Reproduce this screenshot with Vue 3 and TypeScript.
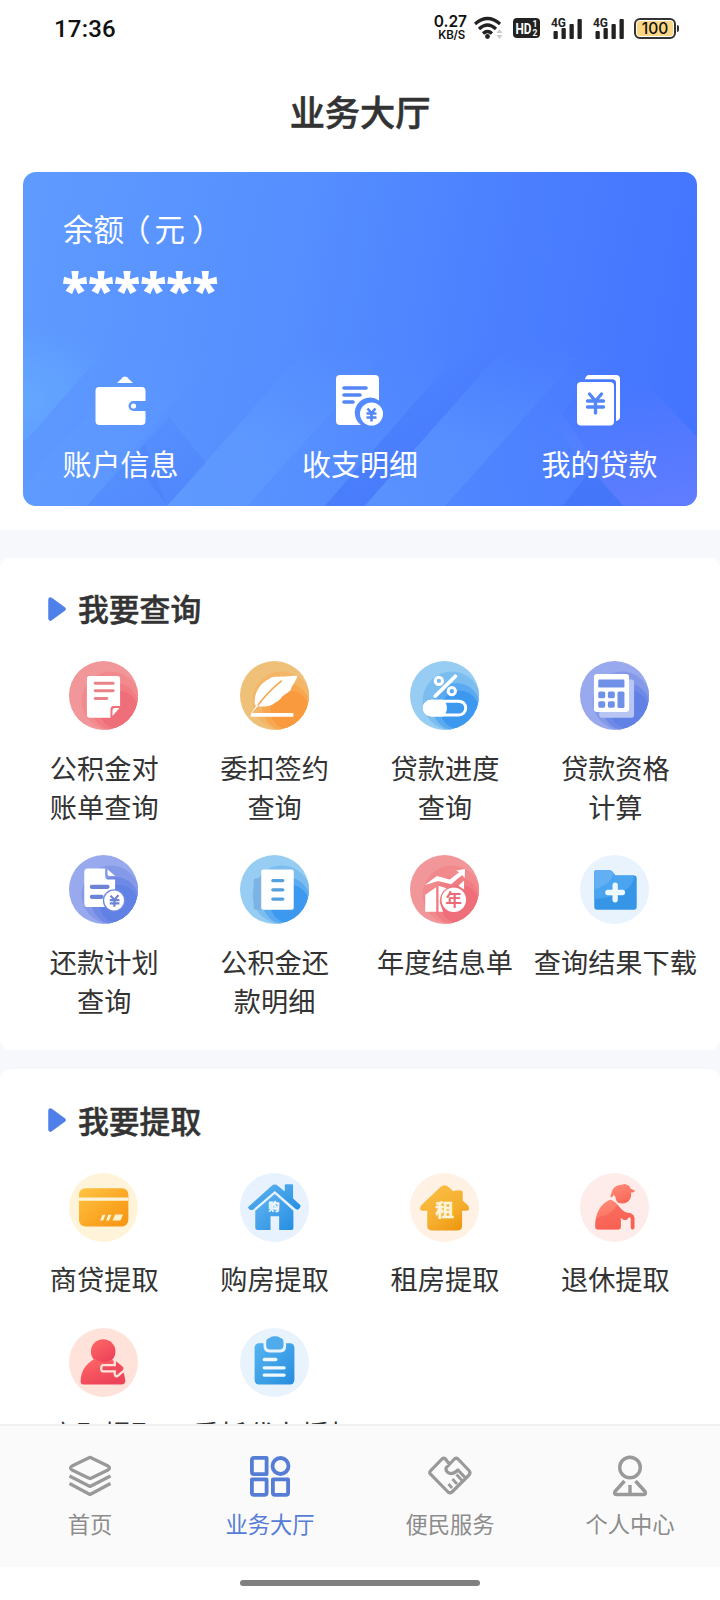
<script setup lang="ts">
interface Entry {
  lines: string[]
  box: string
  art: string
}

// Layered tinted discs shared by the round service icons.
const swirl = (x: number, y: number, colors: [string, string, string, string]): string =>
  `<rect x="${x}" y="${y}" width="208" height="208" fill="${colors[0]}"/>` +
  `<circle cx="${x + 126}" cy="${y + 120}" r="88" fill="${colors[1]}"/>` +
  `<circle cx="${x + 139}" cy="${y + 138}" r="72" fill="${colors[2]}"/>` +
  `<circle cx="${x + 150}" cy="${y + 148}" r="58" fill="${colors[3]}"/>`

const red: [string, string, string, string] = ['#f19799', '#f28a8d', '#f17c82', '#ee6f79']
const orange: [string, string, string, string] = ['#efc077', '#f3b566', '#f6a750', '#f89a3d']
const sky: [string, string, string, string] = ['#97cdf3', '#7cbdf0', '#59aaf0', '#3d98ef']
const indigo: [string, string, string, string] = ['#98a9ee', '#8499e8', '#6f8ae6', '#6281e4']

const cjk = `font-family="'Noto Sans CJK SC', sans-serif" font-weight="700" text-anchor="middle"`

const queries: Entry[] = [
  {
    lines: ['公积金对', '账单查询'],
    box: '118 243 208 208',
    art:
      swirl(118, 243, red) +
      `<path d="M180 288H264Q272 288 272 296V379H252Q243 380 243 390V414H180Q172 414 172 406V296Q172 288 180 288Z" fill="#fff"/>
       <path d="M249 409V393Q249 385 257 385H270Z" fill="#fff"/>
       <g stroke="#e98287" stroke-width="9" stroke-linecap="round"><path d="M197 310H251M197 333H251M197 356H232"/></g>`,
  },
  {
    lines: ['委扣签约', '查询'],
    box: '628 243 208 208',
    art:
      swirl(628, 243, orange) +
      `<path d="M673 376C668 349 682 319 704 304C709 298 717 298 720 294C731 288 745 291 751 290C767 291 784 285 801 288C797 304 782 319 780 332C773 339 763 343 755 350C749 362 737 366 728 373C714 380 697 381 685 380Z" fill="#fff"/>
       <path d="M668 397Q700 345 754 302" fill="none" stroke="#f3a957" stroke-width="5"/>
       <path d="M683 378L664 400H789V411H660Q659 401 667 393L679 374Z" fill="#fff"/>`,
  },
  {
    lines: ['贷款进度', '查询'],
    box: '150 63 208 208',
    art:
      swirl(150, 63, sky) +
      `<g fill="none" stroke="#fff"><circle cx="237" cy="123" r="11" stroke-width="9"/><circle cx="276" cy="154" r="11" stroke-width="9"/>
       <path d="M287 109L226 169" stroke-width="11" stroke-linecap="round"/><rect x="193" y="184" width="125" height="42" rx="21" stroke-width="9"/></g>
       <path d="M214 180H250C265 191 265 218 250 230H214A25 25 0 0 1 214 180Z" fill="#fff"/>`,
  },
  {
    lines: ['贷款资格', '计算'],
    box: '662 63 208 208',
    art:
      swirl(662, 63, indigo) +
      `<rect x="720" y="119" width="105" height="115" rx="8" fill="#b9c6f4"/><rect x="704" y="102" width="106" height="115" rx="9" fill="#fff"/>
       <g fill="#6f92e8"><rect x="717" y="119" width="79" height="24" rx="4"/><rect x="717" y="155" width="21" height="20" rx="5"/><rect x="746" y="155" width="21" height="20" rx="5"/><rect x="717" y="184" width="21" height="20" rx="5"/><rect x="746" y="184" width="21" height="20" rx="5"/><rect x="775" y="155" width="21" height="50" rx="5"/></g>`,
  },
  {
    lines: ['还款计划', '查询'],
    box: '118 45 208 208',
    art:
      swirl(118, 45, indigo) +
      `<path d="M175 86H227V108Q228 120 240 119H257V202H175Q164 202 164 191V97Q164 86 175 86Z" fill="#fff"/><path d="M234 88L257 108H240Q234 108 234 102Z" fill="#fff"/>
       <path d="M187 141H234M187 171H216" stroke="#6c83d6" stroke-width="13" stroke-linecap="round"/>
       <circle cx="254" cy="182" r="34" fill="#6f8ae2"/><circle cx="254" cy="182" r="30" fill="#fff"/>
       <path d="M243 168L255 180L267 166M255 180V201M241 181H270M241 191H270" fill="none" stroke="#6c83d6" stroke-width="6.500"/>`,
  },
  {
    lines: ['公积金还', '款明细'],
    box: '628 45 208 208',
    art:
      swirl(628, 45, sky) +
      `<rect x="669" y="116" width="60" height="94" rx="7" fill="#7db2e4"/><rect x="692" y="89" width="98" height="121" rx="6" fill="#fff"/>
       <path d="M727 122H757M727 150H757M727 178H757" stroke="#56a0dc" stroke-width="10" stroke-linecap="round"/>`,
  },
  {
    lines: ['年度结息单'],
    box: '150 45 208 208',
    art:
      swirl(150, 45, red) +
      `<path d="M196 165L229 142V216H196ZM236 138L260 145L249 155Q238 174 240 190L250 216H236Z" fill="#fff"/>
       <path d="M194 136L231 108L270 119L298 97L289 92L316 87L315 114L307 105L274 133L234 123Z" fill="#fff"/><path d="M296 138L313 122V149Z" fill="#fff"/>
       <circle cx="282" cy="180" r="37" fill="#fff"/><text x="282" y="198" font-size="50" fill="#e96c78" ${cjk}>年</text>`,
  },
  {
    lines: ['查询结果下载'],
    box: '662 45 208 208',
    art: `<rect x="662" y="45" width="208" height="208" fill="#e9f3fe"/>
       <path d="M713 90H749Q755 90 759 95L769 107H825Q833 107 833 116V201Q833 210 824 210H714Q705 210 705 201V98Q705 90 713 90Z" fill="#3795e8"/>
       <path d="M713 90H749Q755 90 759 95L769 107H825C825 141 788 172 705 178V98Q705 90 713 90Z" fill="#4ba4f0"/><path d="M713 90H749Q759 96 763 101C757 126 731 143 705 148V98Q705 90 713 90Z" fill="#62aff3"/>
       <path d="M768 136V180M746 158H790" stroke="#eef8ff" stroke-width="16" stroke-linecap="round"/>`,
  },
]

const withdrawals: Entry[] = [
  {
    lines: ['商贷提取'],
    box: '118 248 208 208',
    art: `<defs><linearGradient id="bankcard" x1="0" y1="0" x2="1" y2="1"><stop offset="0" stop-color="#ffc444"/><stop offset=".6" stop-color="#faa522"/><stop offset="1" stop-color="#f69413"/></linearGradient></defs>
       <rect x="118" y="248" width="208" height="208" fill="#fff4d9"/><rect x="148" y="294" width="149" height="115" rx="19" fill="url(#bankcard)"/><path d="M148 327H297" stroke="#fff4d9" stroke-width="10"/>
       <path d="M219 374H228L221 391H212ZM236 374H246L239 391H230ZM257 373H281L273 391H249Z" fill="#fff3cf"/>`,
  },
  {
    lines: ['购房提取'],
    box: '629 248 208 208',
    art: `<defs><linearGradient id="house" x1="0" y1="0" x2="1" y2="1"><stop offset="0" stop-color="#62b5f1"/><stop offset="1" stop-color="#258ee2"/></linearGradient></defs>
       <rect x="629" y="248" width="208" height="208" fill="#e7f2fe"/>
       <path d="M655 349L724 287Q734 279 744 287L764 304V284Q764 282 768 282H786Q789 282 789 286V325L810 344Q814 350 807 356Q803 361 796 356L734 302L669 358Q663 362 657 357Q651 353 655 349Z" fill="url(#house)"/>
       <path d="M675 362L734 311L790 362V414Q790 420 784 420H747V378H721V420H682Q675 420 675 413Z" fill="url(#house)"/>
       <text x="731" y="364" font-size="34" fill="#f4fbff" stroke="#f4fbff" ${cjk}>购</text>`,
  },
  {
    lines: ['租房提取'],
    box: '150 67 208 208',
    art: `<defs><linearGradient id="rent" x1="0" y1="0" x2=".7" y2="1"><stop offset="0" stop-color="#fbc24a"/><stop offset=".7" stop-color="#f5ad2c"/><stop offset="1" stop-color="#ee9812"/></linearGradient></defs>
       <rect x="150" y="67" width="208" height="208" fill="#fff2e4"/>
       <path d="M242 109Q254 99 266 109L281 122Q284 120 288 120H303Q309 120 309 126V150L325 165Q329 171 327 178Q325 181 319 181H307V227Q307 240 294 240H215Q202 240 202 227V181H187Q180 181 180 174Q180 167 187 161Z" fill="url(#rent)"/>
       <text x="255" y="200" font-size="56" fill="#fff5dd" stroke="#fff5dd" stroke-width="1.500" ${cjk}>租</text>`,
  },
  {
    lines: ['退休提取'],
    box: '662 67 208 208',
    art: `<defs><linearGradient id="elder" x1="0" y1="0" x2=".4" y2="1"><stop offset="0" stop-color="#ff8d79"/><stop offset="1" stop-color="#fb6858"/></linearGradient></defs>
       <rect x="662" y="67" width="208" height="208" fill="#feecea"/>
       <path d="M758 140Q751 139 756 131Q760 106 781 103Q788 103 793 101Q799 99 804 103Q812 104 814 114L827 120Q828 124 821 126L816 126Q818 147 804 155Q791 163 776 156Q769 150 768 137Q764 135 762 132Q763 138 758 140Z" fill="url(#elder)"/>
       <path d="M749 149Q755 146 761 151Q773 157 780 169Q791 183 803 187Q815 186 823 194Q827 199 826 208V232Q826 237 821 237Q815 237 815 231V205Q814 199 809 201Q802 212 792 207Q788 205 785 201V229Q785 237 777 237H716Q708 237 708 229C707 188 724 161 749 149Z" fill="url(#elder)"/>
       <path d="M709 207Q715 198 742 194Q762 184 775 162Q788 181 803 187Q815 186 823 194Q827 199 826 208V232Q826 237 821 237Q815 237 815 231V205Q814 199 809 201Q802 212 792 207Q788 205 785 201V229Q785 237 777 237H716Q708 237 708 229Z" fill="#f55b50" opacity=".55"/>`,
  },
  {
    lines: ['离职提取'],
    box: '208 52 208 208',
    art: `<defs><linearGradient id="leave" x1="0" y1="0" x2=".6" y2="1"><stop offset="0" stop-color="#ff6a67"/><stop offset="1" stop-color="#ed4258"/></linearGradient></defs>
       <rect x="208" y="52" width="208" height="208" fill="#ffe3db"/><circle cx="311" cy="123" r="37" fill="url(#leave)"/>
       <path d="M286 145Q310 165 336 147Q362 160 374 190L378 211Q378 222 366 222H252Q243 222 243 213Q243 169 286 145Z" fill="url(#leave)"/>
       <path d="M312 164H346V154Q347 147 354 151L374 168Q378 174 373 181L354 197Q347 199 346 192V183H312Q305 183 305 174Q305 164 312 164Z" fill="#f04c5c" stroke="#ffe3db" stroke-width="7"/>`,
  },
  {
    lines: ['委托代办授权'],
    box: '718 52 208 208',
    art: `<defs><linearGradient id="clip" x1="0" y1="0" x2="1" y2="1"><stop offset="0" stop-color="#56b5f0"/><stop offset="1" stop-color="#278dde"/></linearGradient></defs>
       <rect x="718" y="52" width="208" height="208" fill="#e9f3fe"/><rect x="762" y="98" width="120" height="124" rx="13" fill="url(#clip)"/>
       <path d="M789 96V108Q789 126 807 126H840Q857 126 857 108V96Z" fill="#e9f3fe"/>
       <path d="M807 82Q812 76 823 77Q835 76 840 82Q849 84 849 94V105Q849 117 837 117H809Q797 117 797 105V94Q797 84 807 82Z" fill="#4fabeb"/>
       <path d="M791 147H826M791 172H851M791 194H851" stroke="#edf8ff" stroke-width="10" stroke-linecap="round"/>`,
  },
]

const sections = [
  { title: '我要查询', cls: 'query', items: queries },
  { title: '我要提取', cls: 'withdraw', items: withdrawals },
]

const bars = [8, 11, 15, 20]
</script>

<template>
  <div class="phone">
    <header class="status">
      <span class="clock">17:36</span>
      <div class="indicators">
        <div class="speed"><b>0.27</b><i>KB/S</i></div>
        <svg class="wifi" width="30" height="24" viewBox="0 0 30 24">
          <g fill="none" stroke="#222" stroke-width="3.200">
            <path d="M1 8Q13.500 -3 26 8M5 13Q13.500 5 22 13M9 17.500Q13.500 13.500 18 17.500" />
          </g>
          <circle cx="13.500" cy="20.500" r="2.400" fill="#222" />
          <path d="M22.500 17L25.500 13L28.500 17ZM22.500 19L25.500 23L28.500 19Z" fill="#ccc" />
        </svg>
        <svg class="hd" width="27" height="20" viewBox="0 0 27 20">
          <rect width="27" height="20" rx="4" fill="#222" />
          <g fill="#fff" font-family="Roboto, sans-serif" font-weight="700">
            <text x="2.500" y="15.500" font-size="15" textLength="16" lengthAdjust="spacingAndGlyphs">HD</text>
            <text x="19.500" y="9" font-size="8.500">1</text>
            <text x="19.500" y="17.500" font-size="8.500">2</text>
          </g>
        </svg>
        <svg v-for="n in 2" :key="n" class="signal" width="30" height="24" viewBox="0 0 30 24">
          <rect v-for="(h, i) in bars" :key="i" :x="1.500 + i * 8" :y="23 - h" width="4.300" :height="h" rx="1" fill="#222" />
          <text x="-1" y="11" font-family="Roboto, sans-serif" font-weight="700" font-size="13" fill="#222" stroke="#fff" stroke-width="2" paint-order="stroke" textLength="15" lengthAdjust="spacingAndGlyphs">4G</text>
        </svg>
        <div class="battery">100</div>
      </div>
    </header>

    <h1 class="title">业务大厅</h1>

    <section class="balance">
      <svg class="pattern" viewBox="51 36 1467 1001" preserveAspectRatio="none">
        <defs>
          <linearGradient id="fade" x1="0" y1="560" x2="0" y2="1036" gradientUnits="userSpaceOnUse">
            <stop offset="0" stop-color="#6ba8ff" stop-opacity="0" />
            <stop offset=".6" stop-color="#6ba8ff" stop-opacity=".45" />
            <stop offset="1" stop-color="#6ba8ff" stop-opacity=".5" />
          </linearGradient>
          <linearGradient id="shade" x1="0" y1="560" x2="0" y2="1036" gradientUnits="userSpaceOnUse">
            <stop offset="0" stop-color="#3c6cf4" stop-opacity="0" />
            <stop offset="1" stop-color="#3c6cf4" stop-opacity=".5" />
          </linearGradient>
          <linearGradient id="violet" x1="1340" y1="680" x2="1516" y2="1036" gradientUnits="userSpaceOnUse">
            <stop offset="0" stop-color="#7583ff" stop-opacity="0" />
            <stop offset="1" stop-color="#7583ff" stop-opacity=".6" />
          </linearGradient>
          <radialGradient id="glow" cx="51" cy="720" r="230" gradientUnits="userSpaceOnUse">
            <stop offset="0" stop-color="#66acff" stop-opacity=".75" />
            <stop offset="1" stop-color="#66acff" stop-opacity="0" />
          </radialGradient>
        </defs>
        <path d="M51 460H300L51 850Z" fill="url(#glow)" />
        <path d="M51 980L320 560H480L190 1036H51Z" fill="url(#fade)" opacity=".3" />
        <path d="M190 1036L315 850L365 1036Z" fill="url(#shade)" opacity=".4" />
        <path d="M315 850L370 770L450 910L365 1036L290 900Z" fill="url(#shade)" opacity=".5" />
        <path d="M365 1036L670 560H850L540 1036Z" fill="url(#fade)" opacity=".7" />
        <path d="M540 1036L850 560H1010L708 1036Z" fill="url(#fade)" opacity=".3" />
        <path d="M708 1036L1010 560H1100L795 1036Z" fill="url(#shade)" opacity=".8" />
        <path d="M795 1036L1100 560H1280L970 1036Z" fill="url(#fade)" opacity=".75" />
        <path d="M970 1036L1280 560H1340L1225 760L1357 1036Z" fill="url(#fade)" opacity=".3" />
        <path d="M1225 1036L1295 915L1357 1036Z" fill="url(#shade)" />
        <path d="M1357 1036L1180 760L1340 570L1518 830V1036Z" fill="url(#violet)" />
      </svg>
      <div class="balance-body">
        <div class="balance-label">余额<span class="open">（</span>元<span class="close">）</span></div>
        <div class="balance-value">******</div>
        <div class="shortcuts">
          <div class="shortcut">
            <svg width="52" height="52" viewBox="0 0 52 52">
              <path d="M22 8L28 2.200Q30 .8 32 2.200L38 8Z" fill="#fff" />
              <path d="M4 12H47Q50.500 12 50.500 16V26H38.500A5 5 0 0 0 38.500 36H50.500V46Q50.500 50 46.500 50H4.500Q.5 50 .5 46V16Q.5 12 4 12Z" fill="#fff" />
              <circle cx="38.500" cy="31" r="2.600" fill="#fff" />
            </svg>
            <span>账户信息</span>
          </div>
          <div class="shortcut">
            <svg width="52" height="52" viewBox="0 0 52 52">
              <path d="M6 0H41Q45 0 45 4V25.500A14.500 14.500 0 0 0 27 50H6Q2 50 2 46V4Q2 0 6 0Z" fill="#fff" />
              <path d="M10 13H32M10 20H26M10 27H19" stroke="#5487f5" stroke-width="3.600" stroke-linecap="round" />
              <circle cx="37.500" cy="39" r="11.500" fill="#fff" />
              <path d="M33.500 33.500L37.500 38L41.500 33.500M37.500 38V46.500M32.500 38.500H42.500M32.500 42.500H42.500" fill="none" stroke="#5487f5" stroke-width="2.600" />
            </svg>
            <span>收支明细</span>
          </div>
          <div class="shortcut">
            <svg width="52" height="52" viewBox="0 0 52 52">
              <path d="M11 4Q12 0 15 0H42Q46 0 46 4V42Q46 45 42 46V8Q42 4.300 38 4.300H11Z" fill="#fff" />
              <rect x="3" y="7" width="37" height="43.500" rx="4" fill="#fff" />
              <path d="M15.500 19L21.500 26L27.500 19M21.500 26V38M13.500 26H29.500M13.500 32H29.500" fill="none" stroke="#5487f5" stroke-width="3.400" stroke-linecap="round" />
            </svg>
            <span>我的贷款</span>
          </div>
        </div>
      </div>
    </section>

    <main class="content">
      <section v-for="s in sections" :key="s.title" class="panel" :class="s.cls">
        <h2>
          <svg width="18" height="24" viewBox="0 0 18 24"><path d="M2.500 2.500L15.500 12L2.500 21.500Z" fill="#4f7fe9" stroke="#4f7fe9" stroke-width="4.500" stroke-linejoin="round" /></svg>
          <span>{{ s.title }}</span>
        </h2>
        <div class="grid">
          <div v-for="item in s.items" :key="item.lines[0]" class="entry">
            <svg class="round" :viewBox="item.box" v-html="item.art" />
            <p><span v-for="line in item.lines" :key="line">{{ line }}</span></p>
          </div>
        </div>
      </section>
    </main>

    <nav class="tabs">
      <div class="tab">
        <svg width="44" height="42" viewBox="0 0 44 42" fill="none" stroke="#999" stroke-width="3.200" stroke-linejoin="round">
          <path d="M20.500 3Q22 2 23.500 3L40 11Q43 13 40 15L23.500 23Q22 24 20.500 23L4 15Q1 13 4 11Z" />
          <path d="M1.500 21L22 31.500L42.500 21M1.500 28.500L22 39.500L42.500 28.500" />
        </svg>
        <span>首页</span>
      </div>
      <div class="tab active">
        <svg width="44" height="42" viewBox="0 0 44 42" fill="none" stroke="#567dd5" stroke-width="3.800">
          <path d="M6 2.900H18.600V19.100H6Q3.900 19.100 3.900 17V5Q3.900 2.900 6 2.900Z" stroke-linejoin="round" />
          <circle cx="32.500" cy="11" r="8" />
          <path d="M3.900 24.400H18.600V38Q18.600 39.800 16.500 39.800H6Q3.900 39.800 3.900 38ZM24.900 24.400H40.100V38Q40.100 39.800 38 39.800H27Q24.900 39.800 24.900 38Z" stroke-linejoin="round" />
        </svg>
        <span>业务大厅</span>
      </div>
      <div class="tab">
        <svg width="44" height="42" viewBox="0 0 44 42" fill="none" stroke="#999" stroke-width="3.200" stroke-linejoin="round">
          <path d="M22 10L17.500 4Q15.800 2.500 14 4L2.500 15.800Q1 17.500 2.500 19.200L20 37Q22 38.700 24 37L41 20Q43 17.800 41 15.500L30 4Q28.200 2.500 26.400 4L18 13Q17.500 17 22 18.500Q26 19 30 15L37 22.500" />
          <path d="M28.500 19.500L34 25.500M24.500 24L29 29M20.500 29L24 33" stroke-width="2.800" />
        </svg>
        <span>便民服务</span>
      </div>
      <div class="tab">
        <svg width="44" height="42" viewBox="0 0 44 42" fill="none" stroke="#999" stroke-width="3.400">
          <circle cx="22" cy="12.500" r="10.300" />
          <path d="M16.500 26L7 36.500Q5.500 39.500 9 39.500H35Q38.500 39.500 37 36.500L27.500 26M22 30V39.500" stroke-linejoin="round" />
        </svg>
        <span>个人中心</span>
      </div>
    </nav>
    <footer class="gesture"><div class="handle" /></footer>
  </div>
</template>

<style>
body {
  margin: 0;
  background: #fff;
}
</style>

<style scoped>
.phone {
  width: 720px;
  height: 1600px;
  overflow: hidden;
  display: flex;
  flex-direction: column;
  background: #fff;
  color: #333;
  font-family: "Noto Sans CJK SC", sans-serif;
}

.phone svg {
  display: block;
  flex: none;
}

.status {
  flex: none;
  height: 56px;
  padding: 0 41px 0 54px;
  display: flex;
  align-items: center;
  justify-content: space-between;
  color: #111;
}

.clock {
  padding-top: 2px;
  font: 500 24px/1 Roboto, sans-serif;
  letter-spacing: 0.2px;
}

.indicators {
  display: flex;
  align-items: center;
}

.speed {
  width: 34px;
  display: flex;
  flex-direction: column;
  align-items: flex-end;
  font-family: Inter, sans-serif;
}

.speed b {
  font-size: 15.500px;
  line-height: 14px;
  font-weight: 600;
}

.speed i {
  font-size: 11.500px;
  line-height: 12px;
  font-weight: 600;
  font-style: normal;
  padding-right: 2px;
  letter-spacing: -0.2px;
}

.wifi {
  margin-left: 7px;
}

.hd {
  margin-left: 9px;
}

.phone .signal {
  margin-left: 12px;
  overflow: visible;
}

.battery {
  box-sizing: border-box;
  position: relative;
  width: 42px;
  height: 21px;
  margin: 0 3px 0 10px;
  border: 2px solid #333;
  border-radius: 6px;
  box-shadow: inset 0 0 0 1px #fff;
  background: #fbd784;
  font: 500 15.500px/17px Inter, sans-serif;
  text-align: center;
}

.battery::after {
  content: "";
  position: absolute;
  right: -5px;
  top: 5px;
  width: 2px;
  height: 7px;
  border-radius: 0 2px 2px 0;
  background: #333;
}

.title {
  flex: none;
  height: 116px;
  margin: 0;
  line-height: 110px;
  text-align: center;
  font-size: 35.200px;
  font-weight: 500;
  -webkit-text-stroke: 0.6px #333;
}

.balance {
  flex: none;
  position: relative;
  height: 334px;
  margin: 0 23px 24px;
  border-radius: 13px;
  overflow: hidden;
  background: linear-gradient(100deg, #5f9bff 0%, #558eff 40%, #4a7eff 70%, #4373ff 100%);
  color: #fff;
}

.pattern {
  position: absolute;
  width: 100%;
  height: 100%;
}

.balance-body {
  position: relative;
  padding: 34px 39px 0;
}

.balance-label {
  padding-left: 1px;
  font-size: 30.500px;
  line-height: 44px;
}

.open {
  margin-left: -4px;
  margin-right: 4px;
}

.close {
  margin-left: 7px;
}

.balance-value {
  height: 125px;
  box-sizing: border-box;
  font: 800 48.500px/76px "Open Sans", sans-serif;
}

.shortcuts {
  display: flex;
  justify-content: space-between;
}

.shortcut {
  width: 117px;
  display: flex;
  flex-direction: column;
  align-items: center;
  white-space: nowrap;
  font-size: 29px;
  line-height: 40px;
}

.shortcut span {
  margin-top: 16px;
}

.content {
  flex: none;
  height: 894px;
  overflow: hidden;
  background: #f6f8fc;
}

.panel {
  background: #fff;
  border-radius: 11px;
}

.query {
  margin-top: 28px;
  height: 492px;
}

.withdraw {
  margin-top: 19px;
  height: 400px;
}

h2 {
  margin: 0 0 0 48px;
  height: 104px;
  display: flex;
  align-items: center;
  gap: 12px;
  font-size: 30.800px;
  line-height: 44px;
  font-weight: 500;
  -webkit-text-stroke: 0.5px #333;
}

.query h2 {
  height: 103px;
}

h2 svg {
  margin-top: -2px;
}

h2 span {
  margin-top: -3px;
}

.grid {
  display: grid;
  grid-template-columns: repeat(4, 170.400px);
  grid-auto-rows: 194px;
  padding-left: 19px;
}

.withdraw .grid {
  grid-auto-rows: 154.500px;
}

.entry {
  display: flex;
  flex-direction: column;
  align-items: center;
}

.round {
  width: 69px;
  height: 69px;
  margin-right: 1px;
  border-radius: 50%;
}

.entry p {
  margin: 17px 0 0;
  display: flex;
  flex-direction: column;
  align-items: center;
  white-space: nowrap;
  font-size: 27.200px;
  line-height: 39.300px;
}

.query .entry p {
  margin-top: 18px;
}

.tabs {
  flex: none;
  box-sizing: border-box;
  height: 143px;
  padding-top: 29px;
  display: grid;
  grid-template-columns: repeat(4, 1fr);
  background: #fafafa;
  border-top: 2px solid #f0f0f0;
}

.tab {
  display: flex;
  flex-direction: column;
  align-items: center;
  color: #8c8c8c;
  font-size: 22.300px;
  line-height: 32px;
}

.tab span {
  margin-top: 10px;
}

.active {
  color: #567dd5;
}

.gesture {
  flex: 1;
  display: flex;
  justify-content: center;
  padding-top: 13px;
}

.handle {
  width: 240px;
  height: 6px;
  border-radius: 3px;
  background: #808080;
}
</style>
